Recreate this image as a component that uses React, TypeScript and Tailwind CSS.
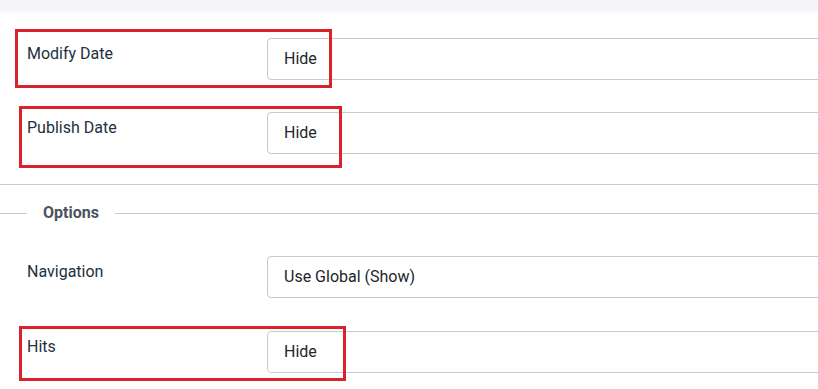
const rows1 = [
  { label: 'Modify Date', value: 'Hide' },
  { label: 'Publish Date', value: 'Hide' },
]

const rows2 = [
  { label: 'Navigation', value: 'Use Global (Show)' },
  { label: 'Hits', value: 'Hide' },
]

const Field = ({ label, value, className }: { label: string; value: string; className?: string }) => (
  <div className={`flex ${className ?? ''}`}>
    <div className="w-[240px] shrink-0 pt-[4px] text-[16px] leading-6 text-[#22303f]">{label}</div>
    <div className="h-[42px] w-[700px] shrink-0 rounded-[4px] border border-[#c3cbd5] bg-white px-4 flex items-center text-[16px] text-[#22262a]">
      {value}
    </div>
  </div>
)

const App = () => {
  return (
    <div className="relative w-[818px] h-[389px] overflow-hidden bg-white font-['Roboto',sans-serif]">
      <div className="h-[10px] bg-[#f3f5f8] shadow-[0_2px_4px_rgba(0,0,0,0.04)]" />

      <div className="pl-[27px] pt-[28px]">
        {rows1.map((r, i) => (
          <Field key={r.label} label={r.label} value={r.value} className={i > 0 ? 'mt-[32px]' : ''} />
        ))}
      </div>

      <div className="mt-[30px] border-t border-[#c3cbd5]" />

      <div className="mt-[18px] flex items-center">
        <div className="w-[27px] border-t border-[#c3cbd5]" />
        <div className="px-4 text-[16px] leading-5 font-bold text-[#495361]">Options</div>
        <div className="flex-1 border-t border-[#c3cbd5]" />
      </div>

      <div className="pl-[27px] pt-[33px]">
        {rows2.map((r, i) => (
          <Field key={r.label} label={r.label} value={r.value} className={i > 0 ? 'mt-[33px]' : ''} />
        ))}
      </div>

      {/* annotation boxes */}
      <div className="absolute left-[15px] top-[29px] w-[317px] h-[59px] border-[3px] border-[#d8222c]" />
      <div className="absolute left-[19px] top-[106px] w-[323px] h-[62px] border-[3px] border-[#d8222c]" />
      <div className="absolute left-[19px] top-[326px] w-[327px] h-[55px] border-[3px] border-[#d8222c]" />
    </div>
  )
}

export default App
